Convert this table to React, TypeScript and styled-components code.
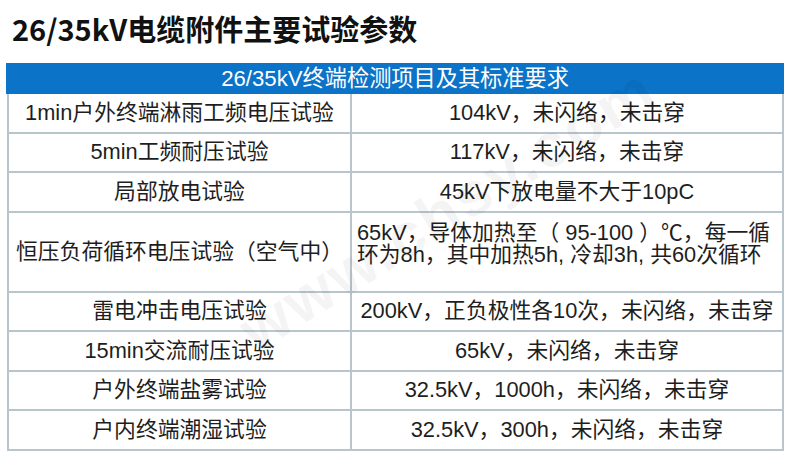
import React from "react";
import styled, { createGlobalStyle } from "styled-components";

const Global = createGlobalStyle`
  html, body { margin: 0; padding: 0; background: #ffffff; }
  body { width: 790px; height: 458px; overflow: hidden; }
`;

const Page = styled.div`
  position: relative;
  width: 790px;
  height: 458px;
  background: #fff;
  font-family: "Liberation Sans", "Noto Sans CJK SC", sans-serif;
`;

const Title = styled.h1`
  margin: 0;
  padding: 10px 0 0 12px;
  height: 63px;
  box-sizing: border-box;
  font-family: "Noto Sans CJK SC", sans-serif;
  font-weight: 700;
  font-size: 29px;
  line-height: 36px;
  color: #111;
  white-space: nowrap;
`;

const Table = styled.div`
  margin-left: 6px;
  width: 778px;
`;

const HeaderBar = styled.div`
  height: 31px;
  background: #0b73c8;
  color: #fff;
  font-size: 22.2px;
  line-height: 31px;
  text-align: center;
  white-space: nowrap;
`;

const Body = styled.div`
  border: 2px solid #b9c5cd;
  border-top: none;
  margin-left: 1px;
`;

const Row = styled.div<{ $tall?: boolean; $last?: boolean }>`
  display: grid;
  grid-template-columns: 343px 1fr;
  height: ${(p) => (p.$tall ? 78 : 37.5)}px;
  border-bottom: ${(p) => (p.$last ? "none" : "2px solid #b9c5cd")};
`;

const Cell = styled.div<{ $left?: boolean; $block?: boolean }>`
  display: flex;
  align-items: ${(p) => (p.$block ? "flex-start" : "center")};
  justify-content: ${(p) => (p.$block ? "flex-start" : "center")};
  text-align: ${(p) => (p.$block ? "left" : "center")};
  padding: ${(p) => (p.$block ? "9px 0 0 5px" : "0")};
  border-right: ${(p) => (p.$left ? "2px solid #b9c5cd" : "none")};
  font-size: 21.8px;
  line-height: 22px;
  color: #1e1e1e;
  white-space: nowrap;
`;

const Watermark = styled.div`
  position: absolute;
  left: 245px;
  top: 300px;
  font-family: "Liberation Sans", sans-serif;
  font-size: 62px;
  font-weight: 700;
  letter-spacing: 3px;
  color: rgba(0, 0, 0, 0.045);
  transform: rotate(-32deg);
  transform-origin: left center;
  pointer-events: none;
  white-space: nowrap;
`;

type R = { a: string; b: React.ReactNode; tall?: boolean };

const rows: R[] = [
  { a: "1min户外终端淋雨工频电压试验", b: "104kV，未闪络，未击穿" },
  { a: "5min工频耐压试验", b: "117kV，未闪络，未击穿" },
  { a: "局部放电试验", b: "45kV下放电量不大于10pC" },
  {
    a: "恒压负荷循环电压试验（空气中）",
    b: (
      <>
        65kV，导体加热至（ 95-100 ）℃，每一循
        <br />
        环为8h，其中加热5h, 冷却3h, 共60次循环
      </>
    ),
    tall: true,
  },
  { a: "雷电冲击电压试验", b: "200kV，正负极性各10次，未闪络，未击穿" },
  { a: "15min交流耐压试验", b: "65kV，未闪络，未击穿" },
  { a: "户外终端盐雾试验", b: "32.5kV，1000h，未闪络，未击穿" },
  { a: "户内终端潮湿试验", b: "32.5kV，300h，未闪络，未击穿" },
];

export default function App() {
  return (
    <Page>
      <Global />
      <Title>26/35kV电缆附件主要试验参数</Title>
      <Table>
        <HeaderBar>26/35kV终端检测项目及其标准要求</HeaderBar>
        <Body>
          {rows.map((r, i) => (
            <Row key={i} $tall={r.tall} $last={i === rows.length - 1}>
              <Cell $left>{r.a}</Cell>
              <Cell $block={r.tall}>{r.b}</Cell>
            </Row>
          ))}
        </Body>
      </Table>
      <Watermark>www.chsy.com</Watermark>
    </Page>
  );
}
